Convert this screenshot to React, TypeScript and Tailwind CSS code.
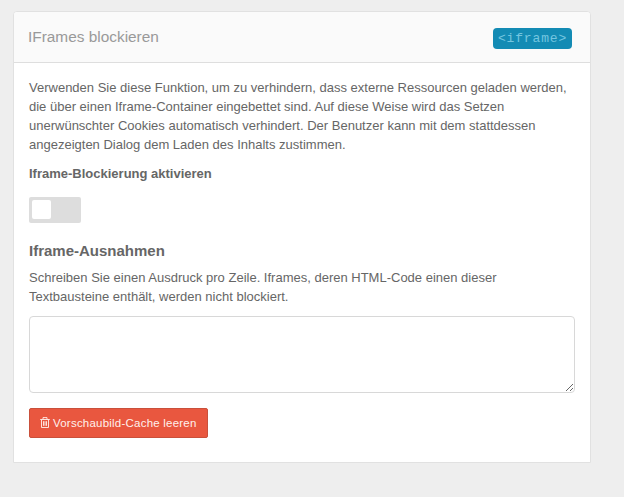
export default function App() {
  return (
    <div className="h-[497px] w-[624px] overflow-hidden bg-[#eeeeee] pl-[13px] pt-[11px] font-['Liberation_Sans',Arial,sans-serif] text-[13px] leading-[19px] text-[#666666]">
      <section className="h-[452px] w-[578px] rounded-t-[4px] border border-[#e1e1e1] bg-white">
        <header className="flex h-[51px] items-center justify-between rounded-t-[3px] border-b border-[#dedede] bg-[#fafafa] pl-[14px] pr-[18px]">
          <h2 className="-mt-[2px] text-[15.4px] text-[#999999]">IFrames blockieren</h2>
          <code className="mt-[2px] flex h-[21px] w-[79px] items-center justify-center rounded-[4px] bg-[#138bb4] font-['Liberation_Mono',monospace] text-[13px] font-light tracking-[0.85px] text-[#74c6e0]">&lt;iframe&gt;</code>
        </header>
        <div className="px-[15px] pt-[15px]">
          <p className="whitespace-nowrap">
            Verwenden Sie diese Funktion, um zu verhindern, dass externe Ressourcen geladen werden,<br />
            die über einen Iframe-Container eingebettet sind. Auf diese Weise wird das Setzen<br />
            unerwünschter Cookies automatisch verhindert. Der Benutzer kann mit dem stattdessen<br />
            angezeigten Dialog dem Laden des Inhalts zustimmen.
          </p>
          <p className="mt-[10px] font-bold">Iframe-Blockierung aktivieren</p>
          <button role="switch" aria-checked="false" aria-label="Iframe-Blockierung aktivieren" className="mt-[14px] flex h-[26px] w-[52px] items-start rounded-[2px] bg-[#dddddd] pl-[3px] pt-[3px]">
            <span className="h-[19px] w-[19px] rounded-[2px] bg-white" />
          </button>
          <h3 className="mt-[18px] text-[15px] font-bold leading-[20px]">Iframe-Ausnahmen</h3>
          <p className="mt-[7px] whitespace-nowrap">
            Schreiben Sie einen Ausdruck pro Zeile. Iframes, deren HTML-Code einen dieser<br />
            Textbausteine enthält, werden nicht blockiert.
          </p>
          <textarea aria-label="Iframe-Ausnahmen" className="mt-[10px] block h-[77px] w-[546px] resize rounded-[4px] border border-[#d8d8d8] bg-white" />
          <button className="mt-[15px] flex h-[30px] w-[179px] items-center gap-[3px] whitespace-nowrap rounded-[2px] border border-[#c9503b] bg-[#e9573f] pl-[10px] text-[11.5px] tracking-[0.22px] text-[#fff0ec]">
            <svg className="-mt-[1px] h-[11px] w-[10px] shrink-0" viewBox="0 0 10 11" fill="none" stroke="currentColor">
              <path d="M.2 2.5h9.6M3 2.3V.6h4v1.7M1.5 2.7v7.8h7V2.7M3.5 4.2v4.6M5 4.2v4.6M6.5 4.2v4.6" strokeWidth=".9" />
            </svg>
            Vorschaubild-Cache leeren
          </button>
        </div>
      </section>
    </div>
  );
}
